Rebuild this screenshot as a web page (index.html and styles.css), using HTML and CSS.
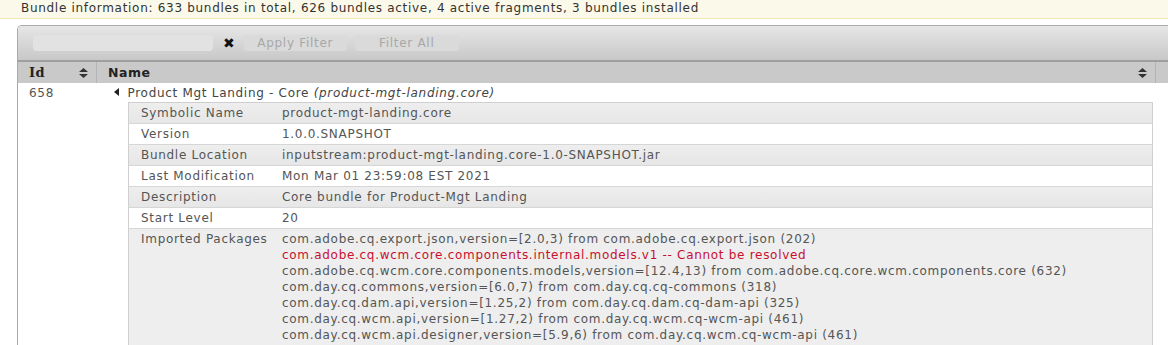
FILE: index.html
```html
<!DOCTYPE html>
<html lang="en">
<head>
    <meta charset="UTF-8">
    <title>Bundles</title>
    <link rel="stylesheet" href="styles.css">
</head>
<body>
    <div class="statusLine">Bundle information: 633 bundles in total, 626 bundles active, 4 active fragments, 3 bundles installed</div>
    <div class="bundleTable">
        <div class="toolbar">
            <div class="filterBox"></div>
            <span class="clearFilter">&#10006;</span>
            <button class="tbButton applyBtn">Apply Filter</button>
            <button class="tbButton allBtn">Filter All</button>
        </div>
        <div class="headRow">
            <div class="headId">Id
                <svg class="sortIcon" width="9" height="10" viewBox="0 0 9 10"><path d="M4.5 0 L9 4 L0 4 Z M0 6 L9 6 L4.5 10 Z" fill="#333"/></svg>
            </div>
            <div class="headName">Name
                <svg class="sortIcon" width="9" height="10" viewBox="0 0 9 10"><path d="M4.5 0 L9 4 L0 4 Z M0 6 L9 6 L4.5 10 Z" fill="#333"/></svg>
            </div>
            <div class="headRest"></div>
        </div>
        <div class="bundleRow">
            <div class="cellId">658</div>
            <div class="cellName">
                <div class="bundleTitle">
                    <svg class="collapse" width="5" height="8" viewBox="0 0 5 8"><path d="M5 0 L0 4 L5 8 Z" fill="#222"/></svg>
                    Product Mgt Landing - Core <i>(product-mgt-landing.core)</i>
                </div>
                <table class="details">
                    <tr class="even"><td class="lbl">Symbolic Name</td><td>product-mgt-landing.core</td></tr>
                    <tr><td class="lbl">Version</td><td>1.0.0.SNAPSHOT</td></tr>
                    <tr class="even"><td class="lbl">Bundle Location</td><td>inputstream:product-mgt-landing.core-1.0-SNAPSHOT.jar</td></tr>
                    <tr><td class="lbl">Last Modification</td><td>Mon Mar 01 23:59:08 EST 2021</td></tr>
                    <tr class="even"><td class="lbl">Description</td><td>Core bundle for Product-Mgt Landing</td></tr>
                    <tr><td class="lbl">Start Level</td><td>20</td></tr>
                    <tr class="even pkgRow"><td class="lbl">Imported Packages</td><td>
                        com.adobe.cq.export.json,version=[2.0,3) from com.adobe.cq.export.json (202)<br>
                        <span class="missing">com.adobe.cq.wcm.core.components.internal.models.v1 -- Cannot be resolved</span><br>
                        com.adobe.cq.wcm.core.components.models,version=[12.4,13) from com.adobe.cq.core.wcm.components.core (632)<br>
                        com.day.cq.commons,version=[6.0,7) from com.day.cq.cq-commons (318)<br>
                        com.day.cq.dam.api,version=[1.25,2) from com.day.cq.dam.cq-dam-api (325)<br>
                        com.day.cq.wcm.api,version=[1.27,2) from com.day.cq.wcm.cq-wcm-api (461)<br>
                        com.day.cq.wcm.api.designer,version=[5.9,6) from com.day.cq.wcm.cq-wcm-api (461)
                    </td></tr>
                </table>
            </div>
        </div>
    </div>
</body>
</html>
```

FILE: styles.css
```css
body{
    margin: 0;
    font-family: "DejaVu Sans", Verdana, sans-serif;
    font-size: 12px;
    letter-spacing: 0.7px;
    color: #555;
    background: #fff;
    overflow: hidden;
}
.statusLine{
    height: 18px;
    line-height: 17px;
    padding-left: 21px;
    background: #fbf9ea;
    border-bottom: 1px solid #f0e8b4;
    color: #333;
}
.bundleTable{
    margin: 6px 0 0 17px;
    width: 1170px;
    border: 1px solid #aaa;
    border-right: none;
    border-bottom: none;
    border-top-left-radius: 5px;
    overflow: hidden;
}
.toolbar{
    height: 34px;
    display: flex;
    align-items: center;
    padding-left: 15px;
    background: linear-gradient(#e6e6e6, #c8c8c8);
    border-bottom: 2px solid #9e9e9e;
}
.filterBox{
    width: 180px;
    height: 16px;
    border-radius: 4px;
    background: #e2e2e2;
}
.clearFilter{
    margin-left: 10px;
    font-size: 14px;
    color: #111;
    font-weight: bold;
    letter-spacing: 0;
}
.tbButton{
    font-family: inherit;
    font-size: 12px;
    letter-spacing: 0.7px;
    color: #a8a8a8;
    background: #dadada;
    border: none;
    border-radius: 3px;
    height: 16px;
    padding: 0;
}
.applyBtn{
    margin-left: 9px;
    width: 103px;
}
.allBtn{
    margin-left: 8px;
    width: 104px;
}
.headRow{
    display: flex;
    height: 21px;
    background: #c9c9c9;
    font-weight: bold;
    color: #222;
    font-size: 12.5px;
    letter-spacing: 0.5px;
}
.headRow div{
    display: flex;
    align-items: center;
    border-right: 1px solid #b4b4b4;
}
.headId{
    width: 67px;
    padding-left: 11px;
    font-family: "DejaVu Serif", serif;
    font-size: 13px;
}
.headName{
    width: 1047px;
    padding-left: 11px;
}
.headRest{
    flex: 1;
    border-right: none !important;
}
.sortIcon{
    margin-left: auto;
    margin-right: 8px;
}
.bundleRow{
    display: flex;
    background: #fff;
}
.cellId{
    width: 68px;
    padding: 3px 0 0 11px;
}
.cellName{
    padding-left: 31px;
}
.bundleTitle{
    height: 18px;
    line-height: 18px;
    padding-top: 1px;
    margin-left: -14px;
    color: #444;
}
.collapse{
    margin-right: 4px;
    vertical-align: 1px;
}
.details{
    border-collapse: collapse;
    table-layout: fixed;
    width: 1025px;
    border: 1px solid #cfcfcf;
    color: #555;
}
.details td{
    height: 20px;
    padding: 0 12px;
    border-bottom: 1px solid #d6d6d6;
    vertical-align: middle;
    white-space: nowrap;
}
.details td.lbl{
    width: 117px;
}
.details tr{
    background: #fff;
}
.details tr.even{
    background: linear-gradient(#eeeeee, #e6e6e6);
}
.details tr.pkgRow{
    background: #eee;
}
.details tr.pkgRow td{
    vertical-align: top;
    line-height: 16px;
    padding-top: 2px;
    padding-bottom: 20px;
}
.missing{
    color: #c8102e;
}
```
